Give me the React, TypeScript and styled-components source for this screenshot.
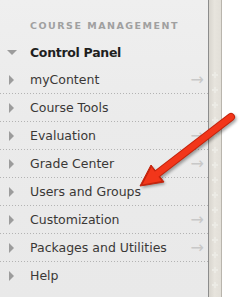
import * as React from 'react';
import styled, { createGlobalStyle } from 'styled-components';

const GlobalStyle = createGlobalStyle`
	html, body {
		margin: 0;
		padding: 0;
		background: #ffffff;
	}
	body {
		width: 242px;
		height: 297px;
		overflow: hidden;
		font-family: 'DejaVu Sans', 'Liberation Sans', sans-serif;
	}
`;

interface IMenuItem {
	label: string;
	hasLink: boolean;
}

const items: IMenuItem[] = [
	{ label: 'myContent', hasLink: true },
	{ label: 'Course Tools', hasLink: false },
	{ label: 'Evaluation', hasLink: true },
	{ label: 'Grade Center', hasLink: true },
	{ label: 'Users and Groups', hasLink: false },
	{ label: 'Customization', hasLink: true },
	{ label: 'Packages and Utilities', hasLink: true },
	{ label: 'Help', hasLink: false },
];

const Page = styled.div`
	position: relative;
	display: flex;
	width: 242px;
	height: 297px;
	overflow: hidden;
`;

const Sidebar = styled.div`
	width: 208px;
	height: 100%;
	background: linear-gradient(to bottom, #efefef 0%, #ebebeb 40%, #e9e9e9 100%);
	display: flex;
	flex-direction: column;
`;

const Heading = styled.div`
	padding: 19px 0 0 30px;
	height: 19px;
	font-size: 9.5px;
	line-height: 13px;
	font-weight: bold;
	letter-spacing: 1.5px;
	color: #a0a0a0;
	white-space: nowrap;
`;

const PanelRow = styled.div`
	display: flex;
	align-items: center;
	height: 28px;
	padding-left: 7px;
	gap: 13px;
	font-size: 12.5px;
	letter-spacing: -0.3px;
	font-weight: bold;
	color: #1f1f1f;
`;

const Row = styled.div<{ $last?: boolean }>`
	display: flex;
	align-items: center;
	height: 27px;
	padding-left: 9px;
	gap: 16px;
	font-size: 12.5px;
	color: #3a3836;
	background-image: ${p => p.$last ? 'none' : 'repeating-linear-gradient(to right, #b3b3b3 0 1px, transparent 1px 3px)'};
	background-size: 100% 1px;
	background-position: left bottom;
	background-repeat: no-repeat;
	padding-bottom: 1px;
`;

const RightTri = styled.span`
	width: 0;
	height: 0;
	border-top: 5px solid transparent;
	border-bottom: 5px solid transparent;
	border-left: 5px solid #9c9c9c;
`;

const DownTri = styled.span`
	width: 0;
	height: 0;
	border-left: 5px solid transparent;
	border-right: 5px solid transparent;
	border-top: 5px solid #9c9c9c;
`;

const Label = styled.span`
	flex: 1;
	white-space: nowrap;
`;

const LinkArrow = styled.span`
	color: #c8c8c8;
	font-size: 16px;
	line-height: 1;
	padding-right: 4px;
`;

const Strip = styled.div`
	width: 12px;
	height: 100%;
	border-left: 1px solid #8c8c8c;
	border-right: 1px solid #b9b5ad;
	background: linear-gradient(to right, #d8d5ce 0%, #e7e4dd 45%, #e2dfd8 100%);
	display: flex;
	flex-direction: column;
	align-items: center;
	padding-top: 72px;
	gap: 9px;
`;

const Plus = styled.span`
	position: relative;
	flex: none;
	width: 6px;
	height: 6px;

	&::before, &::after {
		content: '';
		position: absolute;
		background: #ecebe5;
	}
	&::before {
		left: 2px;
		top: 0;
		width: 2px;
		height: 6px;
	}
	&::after {
		left: 0;
		top: 2px;
		width: 6px;
		height: 2px;
	}
`;

const Overlay = styled.svg`
	position: absolute;
	left: 0;
	top: 0;
	pointer-events: none;
`;

function MenuRow({ item, last }: { item: IMenuItem; last: boolean }) {
	return (
		<Row $last={last}>
			<RightTri />
			<Label>{item.label}</Label>
			{item.hasLink && <LinkArrow>→</LinkArrow>}
		</Row>
	);
}

function RedArrow() {
	return (
		<Overlay width={242} height={297} viewBox='0 0 242 297'>
			<defs>
				<filter id='shadow' x='-20%' y='-20%' width='140%' height='140%'>
					<feGaussianBlur stdDeviation='1.5' />
				</filter>
			</defs>
			<g filter='url(#shadow)' opacity='0.35' transform='translate(1.5 2)'>
				<line x1='231' y1='117' x2='153' y2='177' stroke='#000' strokeWidth='8' strokeLinecap='round' />
				<polygon points='140,186 151,165 164,182' fill='#000' />
			</g>
			<line x1='231' y1='117' x2='153' y2='177' stroke='#c4230c' strokeWidth='8' strokeLinecap='round' />
			<polygon points='140,186 151,165 164,182' fill='#c4230c' stroke='#c4230c' strokeWidth='1' strokeLinejoin='round' />
			<line x1='231' y1='117' x2='153' y2='177' stroke='#f2361a' strokeWidth='6' strokeLinecap='round' />
			<polygon points='142.5,184.5 151.5,167 161.5,181' fill='#f2361a' />
		</Overlay>
	);
}

export default function App() {
	return (
		<Page>
			<GlobalStyle />
			<Sidebar>
				<Heading>COURSE MANAGEMENT</Heading>
				<PanelRow>
					<DownTri />
					<span>Control Panel</span>
				</PanelRow>
				{items.map((item, i) => (
					<MenuRow key={item.label} item={item} last={i === items.length - 1} />
				))}
			</Sidebar>
			<Strip>
				{Array.from({ length: 15 }).map((_, i) => <Plus key={i} />)}
			</Strip>
			<RedArrow />
		</Page>
	);
}
